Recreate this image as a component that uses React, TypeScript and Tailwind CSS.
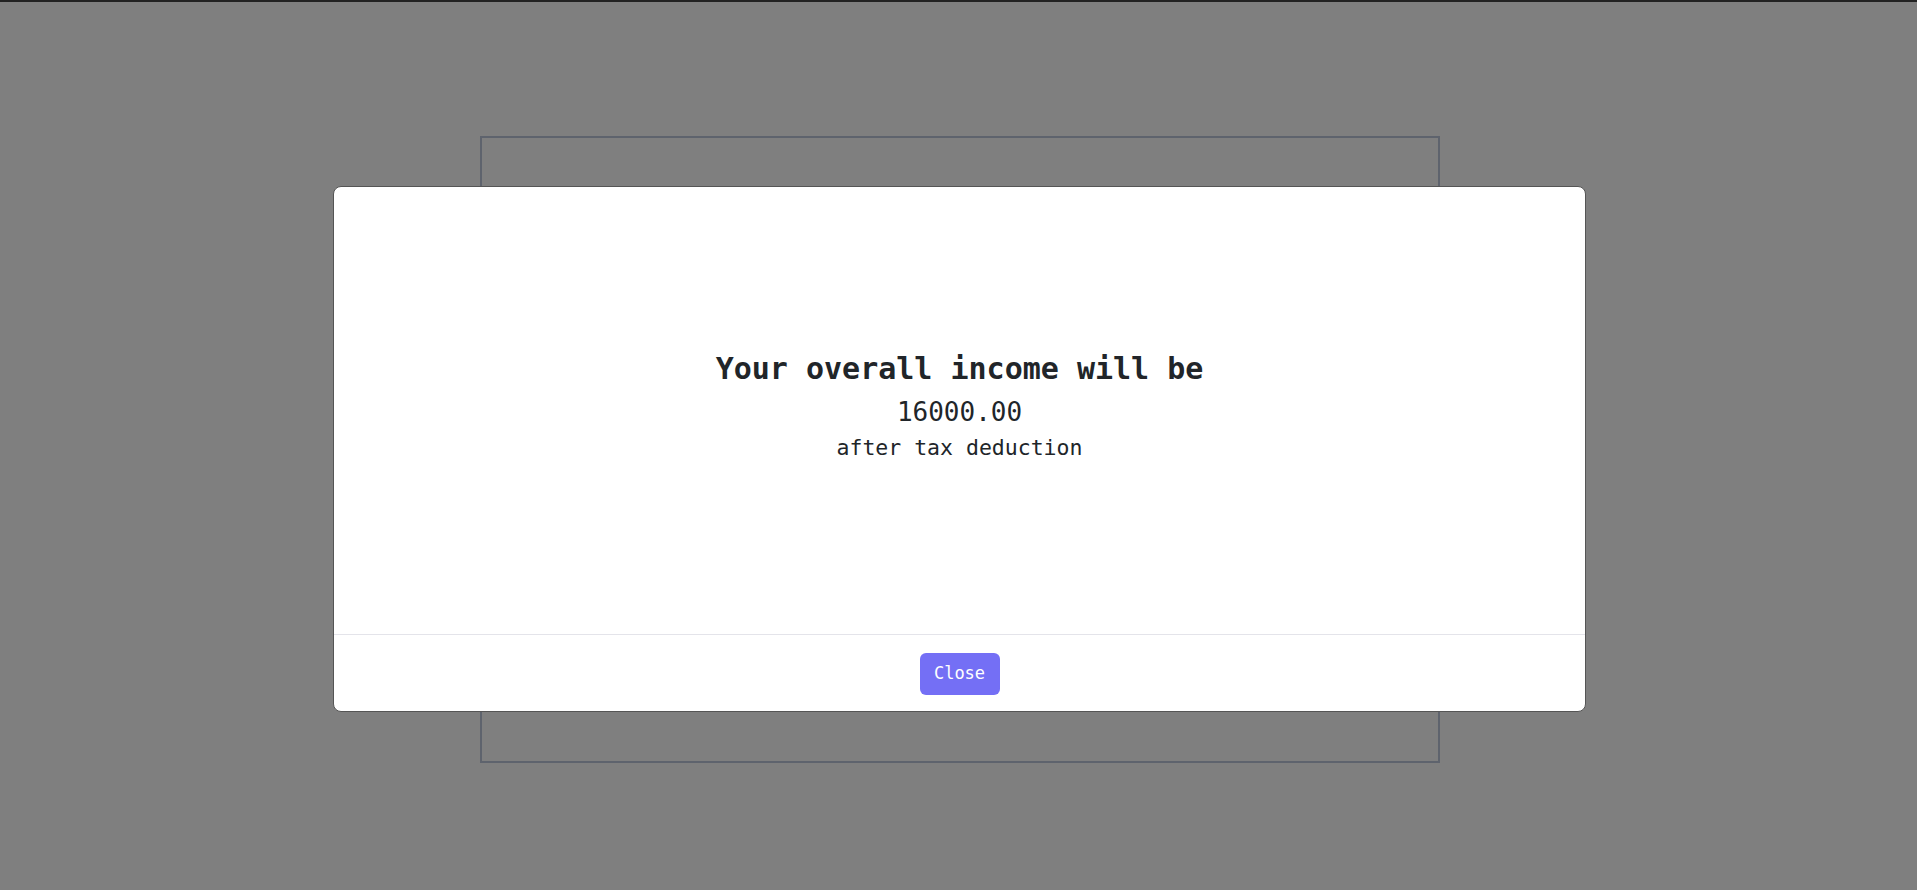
export default function App() {
	return (
		<div
			className="relative min-h-[890px] w-full bg-white"
			style={{ fontFamily: '"DejaVu Sans Mono", "Liberation Mono", monospace' }}
		>
			<div className="h-[2px] w-full bg-[#444]" />
			<div className="flex justify-center pl-[2px] pt-[134px]">
				<div className="h-[627px] w-[960px] border-2 border-[#bcc6da] bg-white" />
			</div>

			<div className="fixed inset-0 flex justify-center bg-black/50 pl-[2px] pt-[186px]">
				<div className="flex h-[526px] w-[1253px] flex-col rounded-lg border border-[#555] bg-white">
					<div className="flex flex-1 flex-col items-center justify-center pb-[9px] text-[#212529]">
						<h1 className="text-3xl font-bold">Your overall income will be</h1>
						<p className="mt-[9px] text-[26px] leading-[32px]">16000.00</p>
						<p className="mt-[6px] text-[21.5px] leading-[28px]">after tax deduction</p>
					</div>
					<div className="flex h-[77px] items-center justify-center border-t border-[#e4e4ea] pt-[2px]">
						<button className="h-[42px] w-[80px] rounded-md bg-[#746ff5] text-[17px] text-white">
							Close
						</button>
					</div>
				</div>
			</div>
		</div>
	);
}
